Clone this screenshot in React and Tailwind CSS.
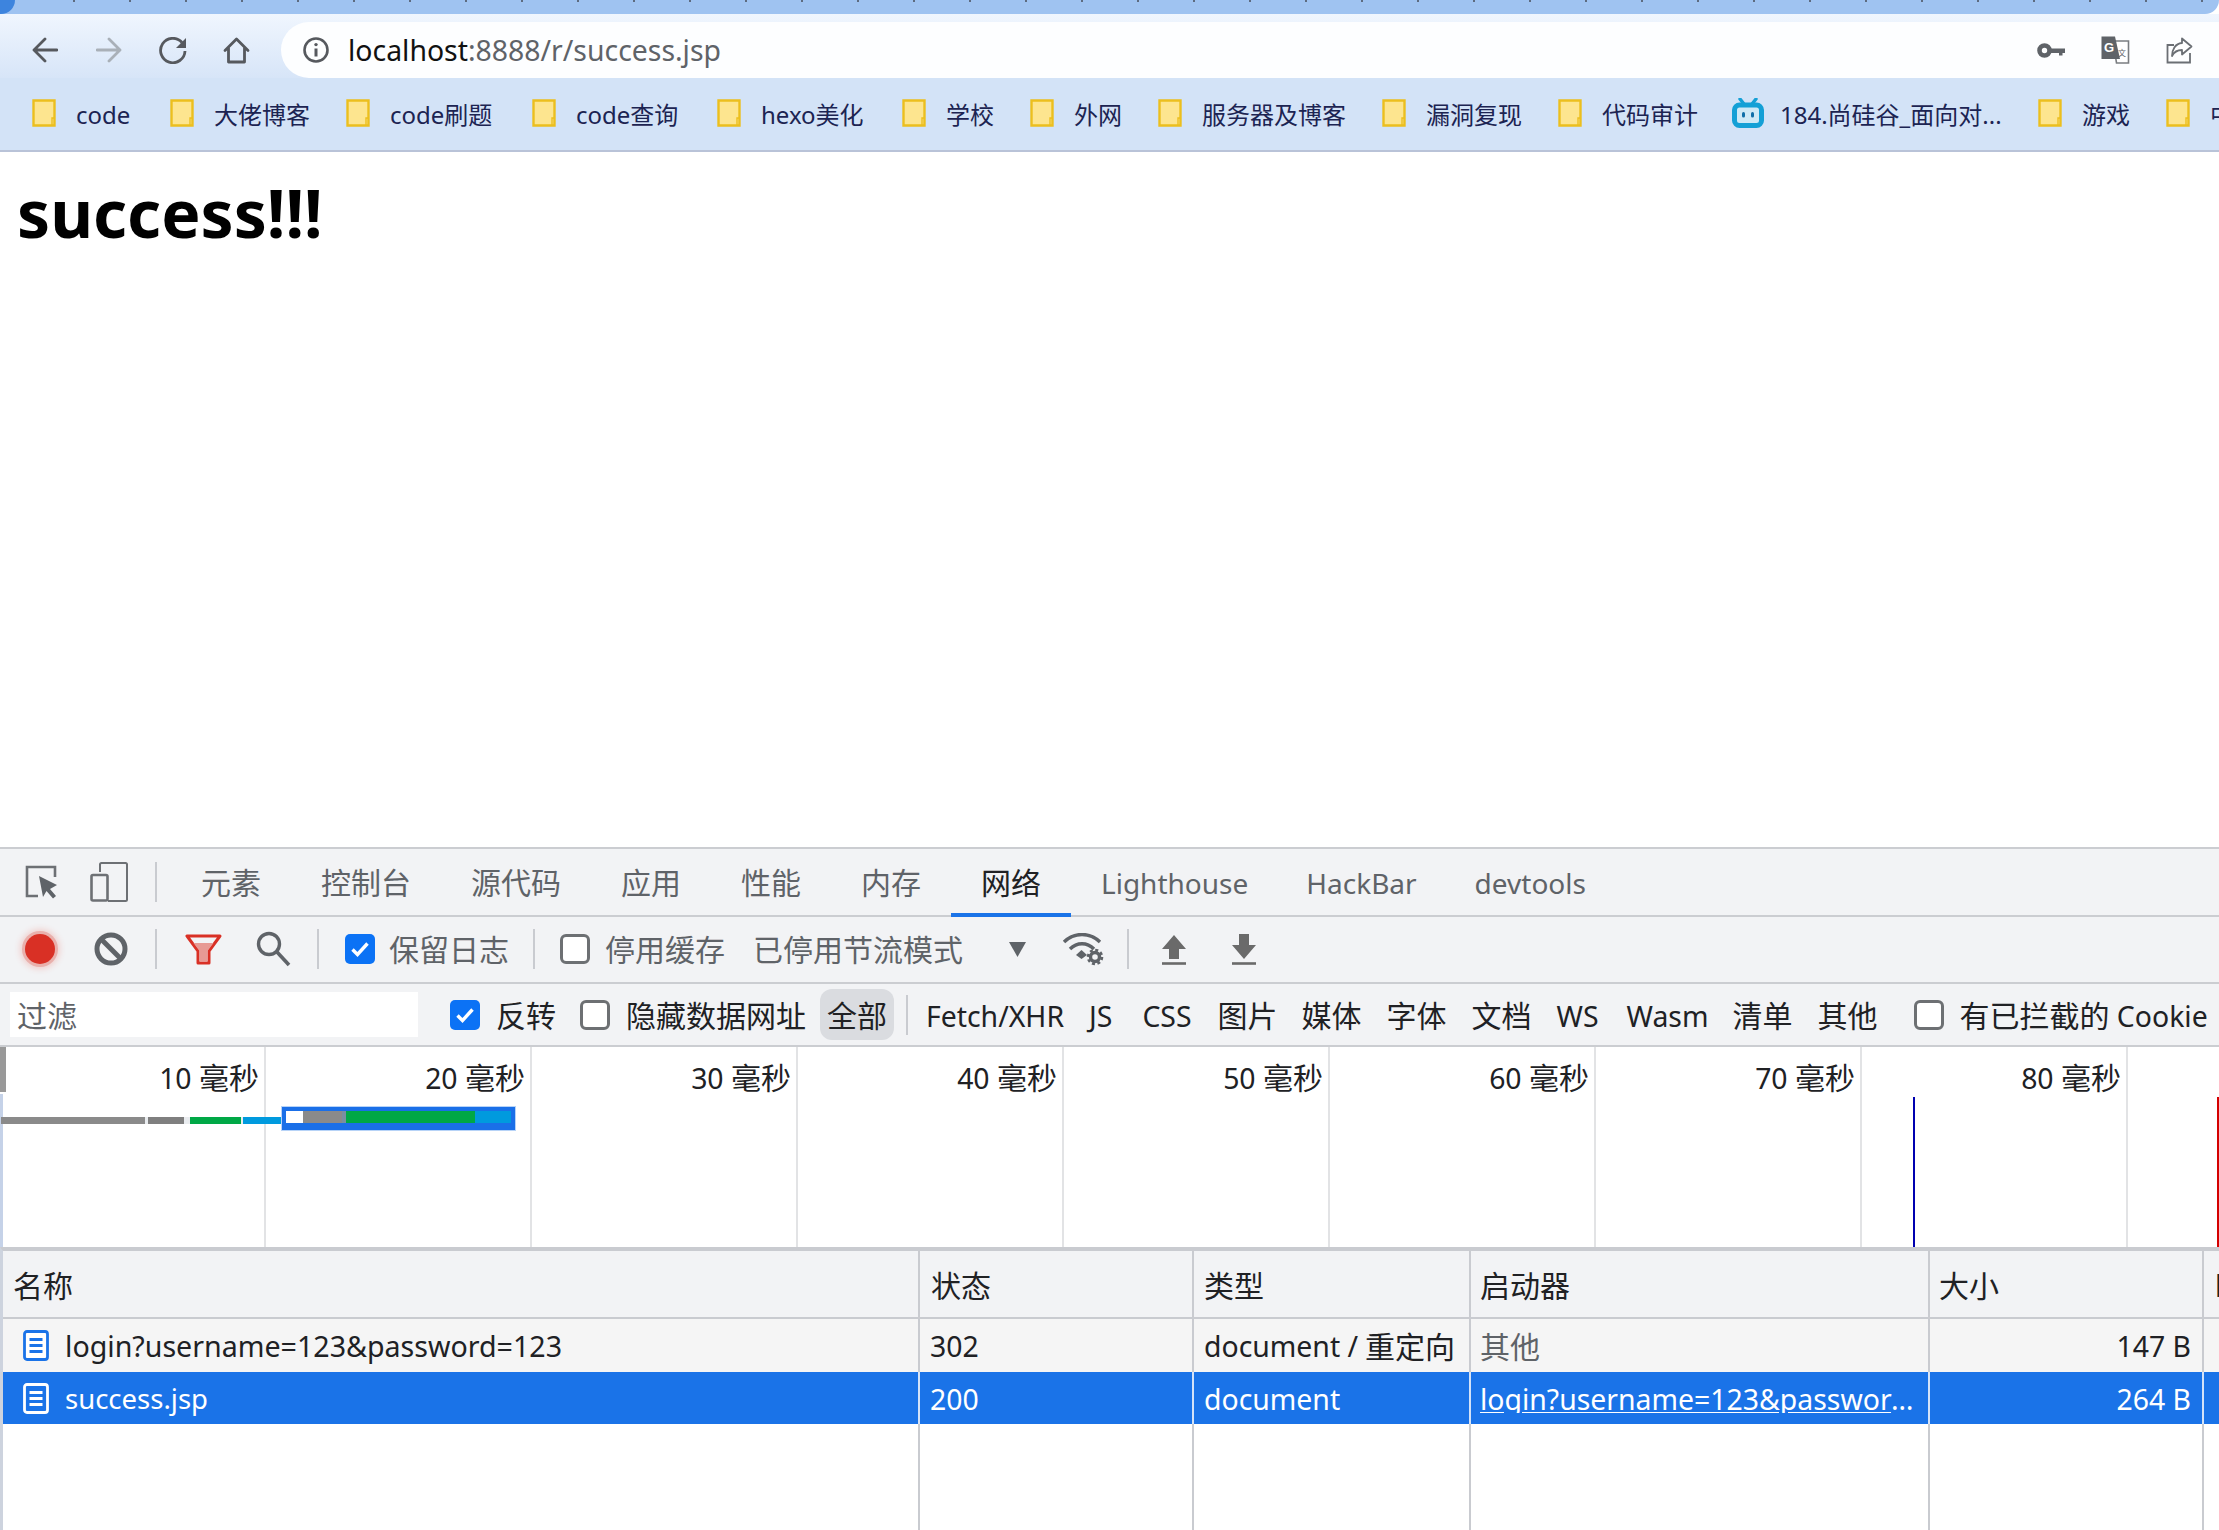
import React from 'react';

const bookmarks = [
  { name: 'code', cls: 'w-[57px]' },
  { name: '大佬博客', cls: 'w-[95px]' },
  { name: 'code刷题', cls: 'w-[105px]' },
  { name: 'code查询', cls: 'w-[104px]' },
  { name: 'hexo美化', cls: 'w-[104px]' },
  { name: '学校', cls: 'w-[47px]' },
  { name: '外网', cls: 'w-[47px]' },
  { name: '服务器及博客', cls: 'w-[143px]' },
  { name: '漏洞复现', cls: 'w-[95px]' },
  { name: '代码审计', cls: 'w-[93px]' },
  { name: '184.尚硅谷_面向对...', cls: 'w-[221px]', bili: true },
  { name: '游戏', cls: 'w-[47px]' },
  { name: '中', cls: 'w-[24px]' },
];

const tabs = ['元素', '控制台', '源代码', '应用', '性能', '内存', '网络'];
const scale = ['10', '20', '30', '40', '50', '60', '70', '80'];
const ticks = Array.from({ length: 39 });

const Folder = () => (
  <svg width="24" height="28" viewBox="0 0 24 28" className="shrink-0">
    <path d="M1.5 1.5H22.5V26.5H1.5Z" fill="#fde58f" stroke="#ecbf1e" strokeWidth="2.4" />
    <path d="M20 26V19H22.5" fill="none" stroke="#ecbf1e" strokeWidth="1.4" />
  </svg>
);

const Bili = () => (
  <svg width="32" height="30" viewBox="0 0 32 30" className="shrink-0">
    <path d="M8 1l4 5M24 1l-4 5" stroke="#14a0d6" strokeWidth="3.4" strokeLinecap="round" />
    <rect x="2.5" y="7" width="27" height="20.5" rx="5" fill="#cfe9f6" stroke="#14a0d6" strokeWidth="5" />
    <rect x="10" y="14" width="3" height="5.5" rx="1.5" fill="#0f6ea8" />
    <rect x="19" y="14" width="3" height="5.5" rx="1.5" fill="#0f6ea8" />
  </svg>
);

const DocIcon = ({ color, fill }) => (
  <svg width="26" height="31" viewBox="0 0 26 31" className="shrink-0">
    <rect x="1.5" y="1.5" width="23" height="28" rx="2.5" fill={fill} stroke={color} strokeWidth="2.8" />
    <path d="M6.5 9.5H19.5M6.5 15.5H19.5M6.5 21.5H19.5" stroke={color} strokeWidth="3" />
  </svg>
);

const Check = ({ on }) =>
  on ? (
    <span className="flex h-[30px] w-[30px] shrink-0 items-center justify-center rounded-[5px] bg-[#0b72f5]">
      <svg width="22" height="22" viewBox="0 0 22 22">
        <path d="M3.5 11.5l5 5 10-11" fill="none" stroke="#fff" strokeWidth="3.4" />
      </svg>
    </span>
  ) : (
    <span className="block h-[30px] w-[30px] shrink-0 rounded-[6px] border-[3px] border-[#6d7073] bg-white" />
  );

const Divider = ({ cls }) => <span className={`block h-[40px] w-[2px] shrink-0 bg-[#c9cbd0] ${cls}`} />;

const Cjk = ({ children, cls = '' }) => <span className={`text-[30px] ${cls}`}>{children}</span>;

export default function App() {
  return (
    <div className="flex h-[1530px] w-[2219px] flex-col overflow-hidden bg-white font-['Noto_Sans','Noto_Sans_CJK_SC',sans-serif] text-[28.4px] text-[#202124]">
      {/* browser frame */}
      <div className="relative flex h-[14px] shrink-0 items-start overflow-hidden rounded-br-[14px] bg-[#9fc3f1] pl-[73px]">
        <span className="absolute left-0 top-0 h-[14px] w-[15px] rounded-br-[14px] bg-[#3d84de]" />
        {ticks.map((_, i) => (
          <span key={i} className="w-[56px] shrink-0">
            <span className="block h-[2px] w-[2px] bg-[#5d6b80]" />
          </span>
        ))}
      </div>

      <div className="flex h-[64px] shrink-0 items-stretch bg-gradient-to-b from-[#f0f6fe] to-[#d7e5f8] pt-[8px]">
        <div className="flex w-[281px] shrink-0 items-center pl-[32px]">
          <svg width="26" height="26" viewBox="0 0 26 26">
            <path d="M25 13H2.5M13 2L2 13l11 11" fill="none" stroke="#56595e" strokeWidth="2.8" strokeLinecap="round" strokeLinejoin="round" />
          </svg>
          <svg width="26" height="26" viewBox="0 0 26 26" className="ml-[38px]">
            <path d="M1 13h22.5M13 2l11 11-11 11" fill="none" stroke="#a9b0b8" strokeWidth="2.8" strokeLinecap="round" strokeLinejoin="round" />
          </svg>
          <svg width="29" height="27" viewBox="0 0 29 27" className="ml-[37px]">
            <path d="M23 5.5A12.2 12.2 0 1 0 26 14" fill="none" stroke="#56595e" strokeWidth="2.8" />
            <path d="M17 11H27V1Z" fill="#56595e" />
          </svg>
          <svg width="27" height="27" viewBox="0 0 27 27" className="ml-[35px]">
            <path d="M2 13.5L13.5 2 25 13.5M5.5 11v14h16V11" fill="none" stroke="#56595e" strokeWidth="2.8" strokeLinejoin="round" strokeLinecap="round" />
          </svg>
        </div>
        <div className="flex flex-1 items-center rounded-l-[28px] bg-[#fdfeff] pl-[22px] pr-[26px]">
          <svg width="26" height="26" viewBox="0 0 26 26" className="shrink-0">
            <circle cx="13" cy="13" r="11.5" fill="none" stroke="#56595e" strokeWidth="2.6" />
            <path d="M13 11.5V19.5" stroke="#56595e" strokeWidth="3" />
            <circle cx="13" cy="7.6" r="1.7" fill="#56595e" />
          </svg>
          <div className="ml-[19px] flex-1 leading-none">
            <span className="text-[#111]">localhost</span>
            <span className="text-[#5f6368]">:8888/r/success.jsp</span>
          </div>
          <svg width="28" height="15" viewBox="0 0 28 15" className="shrink-0">
            <circle cx="7.5" cy="7.5" r="5" fill="none" stroke="#5f6368" strokeWidth="4.6" />
            <path d="M12 5.5H28V10H25.5V12.5H22V10H12Z" fill="#5f6368" />
          </svg>
          <svg width="29" height="28" viewBox="0 0 29 28" className="ml-[36px] shrink-0">
            <path d="M12 5H27.5V27H15.5Z" fill="#fff" stroke="#7a7d81" strokeWidth="1.6" />
            <path d="M0.5 0.5H14L19 23H0.5Z" fill="#5f6368" />
            <text x="3" y="16" fontSize="13" fontWeight="700" fill="#fff" fontFamily="Liberation Sans, sans-serif">G</text>
            <text x="17" y="20" fontSize="8" fill="#5f6368" fontFamily="Noto Sans CJK SC, sans-serif">文</text>
          </svg>
          <svg width="27" height="27" viewBox="0 0 27 27" className="ml-[36px] shrink-0">
            <path d="M24 16V25.5H1.5V8H8" fill="none" stroke="#6b6f74" strokeWidth="1.8" />
            <path d="M16 1.5L25.5 9.5 16 17.5V13C11 13 8 15 6 19 6 13 9 6.5 16 6Z" fill="#fff" stroke="#6b6f74" strokeWidth="1.8" strokeLinejoin="round" />
          </svg>
        </div>
      </div>

      <div className="flex h-[74px] shrink-0 items-center gap-[37px] overflow-hidden border-b-2 border-[#b9c3d8] bg-[#d3e3f7] pb-[2px] pl-[32px] text-[24px] leading-none text-[#1c2452]">
        {bookmarks.map((b) => (
          <div key={b.name} className="flex shrink-0 items-center">
            {b.bili ? <Bili /> : <Folder />}
            <span className={`whitespace-nowrap pt-[3px] ${b.bili ? 'ml-[16px]' : 'ml-[20px]'} ${b.cls}`}>{b.name}</span>
          </div>
        ))}
      </div>

      {/* page */}
      <div className="h-[695px] shrink-0 bg-white pl-[17px] pt-[15px]">
        <h1 className="text-[66px] font-bold leading-[90px] text-black">success!!!</h1>
      </div>

      {/* devtools */}
      <div className="flex flex-1 flex-col bg-[#f2f3f5]">
        <div className="flex h-[70px] shrink-0 items-center border-y-2 border-[#cbcdd1] pl-[25px] text-[#5f6368]">
          <svg width="34" height="34" viewBox="0 0 34 34" className="shrink-0">
            <path d="M13 31H2V2H30V12" fill="none" stroke="#6d7074" strokeWidth="2.6" />
            <path d="M14 11L32 20 25 24 31 31 28 33.5 21.5 26 18 32Z" fill="#5f6368" />
          </svg>
          <svg width="38" height="40" viewBox="0 0 38 40" className="ml-[31px] shrink-0">
            <path d="M10 10V2.5A1.5 1.5 0 0 1 11.5 1H35.5A1.5 1.5 0 0 1 37 2.5V37.5A1.5 1.5 0 0 1 35.5 39H18" fill="none" stroke="#6d7074" strokeWidth="2" />
            <rect x="1.5" y="13" width="16" height="25.5" rx="1.5" fill="none" stroke="#6d7074" strokeWidth="2.6" />
          </svg>
          <Divider cls="ml-[27px]" />
          <div className="ml-[14px] flex h-full items-center">
            {tabs.map((t) => (
              <div key={t} className={`relative flex h-full items-center px-[30px] pt-[2px] text-[30px] leading-none ${t === '网络' ? 'text-[#202124]' : ''}`}>
                {t}
                {t === '网络' && <span className="absolute -bottom-[2px] left-0 h-[4px] w-full bg-[#1a73e8]" />}
              </div>
            ))}
            <div className="flex h-full items-center pl-[30px] pr-[28px] pt-[2px] text-[28px] leading-none">Lighthouse</div>
            <div className="flex h-full items-center pl-[30px] pr-[28px] pt-[2px] text-[28px] leading-none">HackBar</div>
            <div className="flex h-full items-center px-[30px] pt-[2px] text-[28px] leading-none">devtools</div>
          </div>
        </div>

        <div className="flex h-[67px] shrink-0 items-center border-b-2 border-[#cbcdd1] pb-[1px] pl-[25px] text-[30px] leading-none text-[#5f6368]">
          <span className="block h-[30px] w-[30px] shrink-0 rounded-full bg-[#d93025] shadow-[0_0_0_3px_#e9b0ac,0_0_6px_5px_#f0cfcd]" />
          <svg width="34" height="34" viewBox="0 0 34 34" className="ml-[39px] shrink-0">
            <circle cx="17" cy="17" r="14" fill="none" stroke="#5f6368" strokeWidth="5" />
            <path d="M7 7L27 27" stroke="#5f6368" strokeWidth="5" />
          </svg>
          <Divider cls="ml-[27px]" />
          <svg width="37" height="31" viewBox="0 0 37 31" className="ml-[28px] shrink-0">
            <path d="M2 2H35L24 17V29H13V17Z" fill="#f2f3f5" stroke="#d93025" strokeWidth="3" strokeLinejoin="round" />
            <path d="M8.5 9H28.5L22.5 17V27.5H14.5V17Z" fill="#e79a94" />
          </svg>
          <svg width="35" height="36" viewBox="0 0 35 36" className="ml-[34px] shrink-0">
            <circle cx="13" cy="13" r="10.5" fill="none" stroke="#5f6368" strokeWidth="3.4" />
            <path d="M21 21L33 34" stroke="#5f6368" strokeWidth="3.6" />
          </svg>
          <Divider cls="ml-[26px]" />
          <span className="ml-[26px]"><Check on /></span>
          <span className="ml-[14px] pt-[2px]">保留日志</span>
          <Divider cls="ml-[24px]" />
          <span className="ml-[25px]"><Check /></span>
          <span className="ml-[15px] pt-[2px]">停用缓存</span>
          <span className="ml-[28px] pt-[2px]">已停用节流模式</span>
          <svg width="17" height="15" viewBox="0 0 17 15" className="ml-[46px] shrink-0">
            <path d="M0 0H17L8.5 15Z" fill="#5f6368" />
          </svg>
          <svg width="43" height="33" viewBox="0 0 43 33" className="ml-[36px] shrink-0">
            <path d="M2 9C12 -1 28 -1 38 9M8 16C15 9 25 9 32 16" fill="none" stroke="#5f6368" strokeWidth="3.4" />
            <path d="M14 22L19.5 17 25 22 19.5 26Z" fill="#5f6368" />
            <circle cx="33" cy="24" r="4.5" fill="none" stroke="#5f6368" strokeWidth="3.4" />
            <circle cx="33" cy="24" r="7" fill="none" stroke="#5f6368" strokeWidth="2.6" strokeDasharray="3 2.5" />
          </svg>
          <Divider cls="ml-[22px]" />
          <svg width="26" height="31" viewBox="0 0 26 31" className="ml-[32px] shrink-0">
            <path d="M13 1L25 15H18V25H8V15H1Z" fill="#6a6a6a" />
            <path d="M1 29.5H25" stroke="#6a6a6a" strokeWidth="2.6" />
          </svg>
          <svg width="26" height="31" viewBox="0 0 26 31" className="ml-[44px] shrink-0">
            <path d="M8 0H18V11H25L13 25 1 11H8Z" fill="#6a6a6a" />
            <path d="M1 29.5H25" stroke="#6a6a6a" strokeWidth="2.6" />
          </svg>
        </div>

        <div className="flex h-[63px] shrink-0 items-center whitespace-nowrap border-b-2 border-[#cbcdd1] pl-[10px] leading-none text-[#202124]">
          <div className="flex h-[45px] w-[408px] shrink-0 items-center bg-white pl-[7px] pt-[3px] text-[30px] text-[#5f6368]">过滤</div>
          <span className="ml-[32px]"><Check on /></span>
          <Cjk cls="ml-[16px] pt-[3px]">反转</Cjk>
          <span className="ml-[24px]"><Check /></span>
          <Cjk cls="ml-[16px] pt-[3px]">隐藏数据网址</Cjk>
          <span className="ml-[14px] flex h-[51px] w-[74px] shrink-0 items-center justify-center rounded-[12px] bg-[#dadce0] pt-[3px] text-[30px]">全部</span>
          <Divider cls="ml-[12px]" />
          <div className="ml-[18px] flex items-center pt-[3px]">
            <span>Fetch/XHR</span>
            <span className="ml-[25px]">JS</span>
            <span className="ml-[30px]">CSS</span>
            <Cjk cls="ml-[26px]">图片</Cjk>
            <Cjk cls="ml-[24px]">媒体</Cjk>
            <Cjk cls="ml-[25px]">字体</Cjk>
            <Cjk cls="ml-[25px]">文档</Cjk>
            <span className="ml-[25px]">WS</span>
            <span className="ml-[28px]">Wasm</span>
            <Cjk cls="ml-[24px]">清单</Cjk>
            <Cjk cls="ml-[25px]">其他</Cjk>
          </div>
          <span className="ml-[37px]"><Check /></span>
          <span className="ml-[15px] pt-[3px]"><Cjk>有已拦截的</Cjk> Cookie</span>
        </div>

        {/* timeline */}
        <div className="relative flex h-[200px] shrink-0 bg-white">
          {scale.map((s) => (
            <div key={s} className="w-[266px] shrink-0 border-r-2 border-[#e2e3e5] pr-[5px] pt-[15px] text-right leading-[32px] text-[#202124]">
              {s} <Cjk>毫秒</Cjk>
            </div>
          ))}
          <span className="absolute left-0 top-0 h-[45px] w-[6px] bg-[#999]" />
          <span className="absolute bottom-0 left-0 top-[47px] w-[3px] bg-[#c5d2e8]" />
          <div className="absolute left-[1px] top-[70px] flex h-[7px] items-stretch bg-[#e9ecef]">
            <span className="w-[144px] bg-[#8a8a8a]" />
            <span className="ml-[3px] w-[36px] bg-[#7f7f7f]" />
            <span className="ml-[6px] w-[51px] bg-[#00a846]" />
            <span className="ml-[2px] w-[38px] bg-[#009ade]" />
          </div>
          <div className="absolute left-[281px] top-[59px] flex h-[25px] w-[235px] items-start border border-[#b7d3f7] bg-[#1a6fe8] px-[4px] pt-[4px]">
            <span className="h-[12px] w-[17px] bg-white" />
            <span className="h-[12px] w-[39px] bg-[#8a8a8a]" />
            <span className="h-[12px] w-[4px] bg-[#7a8ea0]" />
            <span className="h-[12px] w-[130px] bg-[#00a846]" />
            <span className="h-[12px] w-[36px] bg-[#009ade]" />
          </div>
          <span className="absolute bottom-0 left-[1913px] top-[50px] w-[2px] bg-[#0000b0]" />
          <span className="absolute bottom-0 left-[2217px] top-[50px] w-[2px] bg-[#d40000]" />
        </div>

        {/* request table */}
        <div className="flex flex-1 flex-col border-t-4 border-[#c9cbd0] border-l-[3px] border-l-[#cdd3de] bg-white leading-none">
          <div className="grid h-[68px] shrink-0 grid-cols-[917px_274px_277px_459px_274px_18px] border-b-2 border-[#c9cbd0] bg-[#f2f3f5] text-[30px] text-[#202124]">
            <div className="flex items-center border-r-2 border-[#c9cbd0] pl-[10px] pt-[3px]">名称</div>
            <div className="flex items-center border-r-2 border-[#c9cbd0] pl-[11px] pt-[3px]">状态</div>
            <div className="flex items-center border-r-2 border-[#c9cbd0] pl-[10px] pt-[3px]">类型</div>
            <div className="flex items-center border-r-2 border-[#c9cbd0] pl-[9px] pt-[3px]">启动器</div>
            <div className="flex items-center border-r-2 border-[#c9cbd0] pl-[9px] pt-[3px]">大小</div>
            <div className="flex items-center overflow-hidden whitespace-nowrap pl-[11px] pt-[3px]">时间</div>
          </div>
          <div className="grid h-[53px] shrink-0 grid-cols-[917px_274px_277px_459px_274px_18px] bg-[#f5f5f5]">
            <div className="flex items-center border-r-2 border-[#c9cbd0] pl-[20px]">
              <DocIcon color="#1a73e8" fill="#fff" />
              <span className="ml-[16px] pt-[2px] text-[28.6px]">login?username=123&amp;password=123</span>
            </div>
            <div className="flex items-center border-r-2 border-[#c9cbd0] pl-[10px] pt-[2px]">302</div>
            <div className="flex items-center whitespace-nowrap border-r-2 border-[#c9cbd0] pl-[10px] pt-[2px]">document / <span className="ml-[7px] text-[30px]">重定向</span></div>
            <div className="flex items-center border-r-2 border-[#c9cbd0] pl-[9px] pt-[2px] text-[30px] text-[#5f6368]">其他</div>
            <div className="flex items-center justify-end border-r-2 border-[#c9cbd0] pr-[11px] pt-[2px]">147 B</div>
            <div />
          </div>
          <div className="grid h-[52px] shrink-0 grid-cols-[917px_274px_277px_459px_274px_18px] bg-[#1a73e8] text-white">
            <div className="flex items-center border-r-2 border-[#d3e2f8] pl-[20px]">
              <DocIcon color="#fff" fill="#1a73e8" />
              <span className="ml-[16px] pt-[2px] text-[27.5px]">success.jsp</span>
            </div>
            <div className="flex items-center border-r-2 border-[#d3e2f8] pl-[10px] pt-[2px]">200</div>
            <div className="flex items-center border-r-2 border-[#d3e2f8] pl-[10px] pt-[2px]">document</div>
            <div className="flex items-center overflow-hidden border-r-2 border-[#d3e2f8] pl-[9px] pt-[2px]">
              <span className="w-[440px] truncate underline">login?username=123&amp;password=123</span>
            </div>
            <div className="flex items-center justify-end border-r-2 border-[#d3e2f8] pr-[11px] pt-[2px]">264 B</div>
            <div />
          </div>
          <div className="grid flex-1 grid-cols-[917px_274px_277px_459px_274px_18px]">
            <div className="border-r-2 border-[#c9cbd0]" />
            <div className="border-r-2 border-[#c9cbd0]" />
            <div className="border-r-2 border-[#c9cbd0]" />
            <div className="border-r-2 border-[#c9cbd0]" />
            <div className="border-r-2 border-[#c9cbd0]" />
            <div />
          </div>
        </div>
      </div>
    </div>
  );
}
